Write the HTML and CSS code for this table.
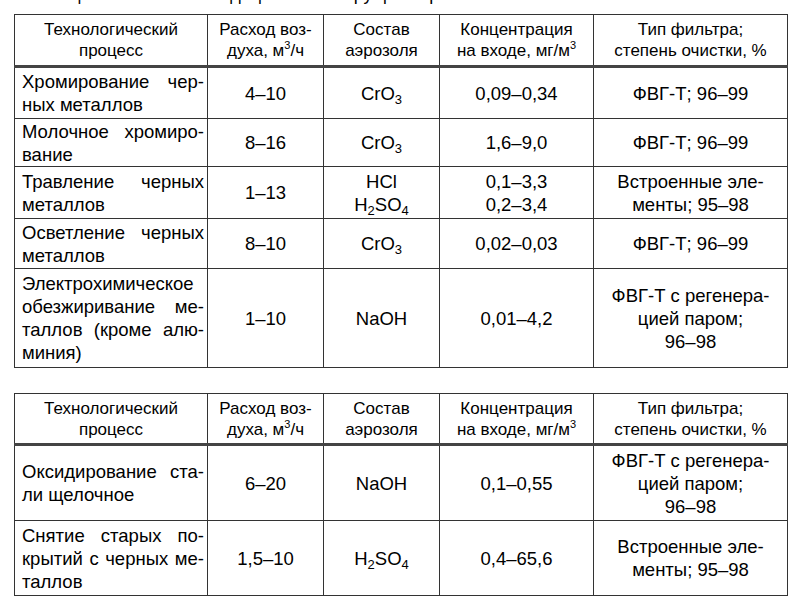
FILE: index.html
```html
<!DOCTYPE html>
<html lang="ru">
<head>
<meta charset="utf-8">
<title>Рекомендации по выбору фильтров</title>
<link rel="stylesheet" href="styles.css">
</head>
<body>
<div class="page">
  <p class="caption">Таблица 2.34 — Рекомендации по выбору фильтров</p>

  <table class="grid first">
    <colgroup>
      <col class="c-proc"><col class="c-air"><col class="c-aer"><col class="c-conc"><col class="c-filt">
    </colgroup>
    <thead>
      <tr class="h-head">
        <th>Технологический<br>процесс</th>
        <th>Расход воз-<br>духа, м<sup>3</sup>/ч</th>
        <th>Состав<br>аэрозоля</th>
        <th>Концентрация<br>на входе, мг/м<sup>3</sup></th>
        <th>Тип фильтра;<br>степень очистки, %</th>
      </tr>
    </thead>
    <tbody>
      <tr class="h-52">
        <td class="proc"><div class="j"><span>Хромирование</span><span>чер-</span></div><div>ных металлов</div></td>
        <td>4–10</td>
        <td>CrO<sub>3</sub></td>
        <td>0,09–0,34</td>
        <td>ФВГ-Т; 96–99</td>
      </tr>
      <tr class="h-48">
        <td class="proc"><div class="j"><span>Молочное</span><span>хромиро-</span></div><div>вание</div></td>
        <td>8–16</td>
        <td>CrO<sub>3</sub></td>
        <td>1,6–9,0</td>
        <td>ФВГ-Т; 96–99</td>
      </tr>
      <tr class="h-52">
        <td class="proc"><div class="j"><span>Травление</span><span>черных</span></div><div>металлов</div></td>
        <td>1–13</td>
        <td>HCl<br>H<sub>2</sub>SO<sub>4</sub></td>
        <td>0,1–3,3<br>0,2–3,4</td>
        <td>Встроенные эле-<br>менты; 95–98</td>
      </tr>
      <tr class="h-50">
        <td class="proc"><div class="j"><span>Осветление</span><span>черных</span></div><div>металлов</div></td>
        <td>8–10</td>
        <td>CrO<sub>3</sub></td>
        <td>0,02–0,03</td>
        <td>ФВГ-Т; 96–99</td>
      </tr>
      <tr class="h-99">
        <td class="proc"><div>Электрохимическое</div><div class="j"><span>обезжиривание</span><span>ме-</span></div><div class="j"><span>таллов</span><span>(кроме</span><span>алю-</span></div><div>миния)</div></td>
        <td>1–10</td>
        <td>NaOH</td>
        <td>0,01–4,2</td>
        <td>ФВГ-Т с регенера-<br>цией паром;<br>96–98</td>
      </tr>
    </tbody>
  </table>

  <table class="grid second">
    <colgroup>
      <col class="c-proc"><col class="c-air"><col class="c-aer"><col class="c-conc"><col class="c-filt">
    </colgroup>
    <thead>
      <tr class="h-head2">
        <th>Технологический<br>процесс</th>
        <th>Расход воз-<br>духа, м<sup>3</sup>/ч</th>
        <th>Состав<br>аэрозоля</th>
        <th>Концентрация<br>на входе, мг/м<sup>3</sup></th>
        <th>Тип фильтра;<br>степень очистки, %</th>
      </tr>
    </thead>
    <tbody>
      <tr class="h-76">
        <td class="proc"><div class="j"><span>Оксидирование</span><span>ста-</span></div><div>ли щелочное</div></td>
        <td>6–20</td>
        <td>NaOH</td>
        <td>0,1–0,55</td>
        <td>ФВГ-Т с регенера-<br>цией паром;<br>96–98</td>
      </tr>
      <tr class="h-75">
        <td class="proc"><div class="j"><span>Снятие</span><span>старых</span><span>по-</span></div><div class="j"><span>крытий</span><span>с</span><span>черных</span><span>ме-</span></div><div>таллов</div></td>
        <td>1,5–10</td>
        <td>H<sub>2</sub>SO<sub>4</sub></td>
        <td>0,4–65,6</td>
        <td>Встроенные эле-<br>менты; 95–98</td>
      </tr>
    </tbody>
  </table>
</div>
</body>
</html>
```

FILE: styles.css
```css
html, body {
  margin: 0;
  padding: 0;
  background: #ffffff;
}

body {
  font-family: "Liberation Sans", Arial, sans-serif;
  color: #000000;
}

.page {
  padding-left: 14px;
}

.caption {
  margin: -17px 0 0 6px;
  font-size: 18px;
  line-height: 23px;
  height: 23px;
  white-space: nowrap;
}

.grid {
  border-collapse: collapse;
  table-layout: fixed;
  width: 773px;
  border: 1px solid #333333;
}

.first {
  margin-top: 8px;
}

.second {
  margin-top: 25px;
}

.c-proc { width: 193px; }
.c-air { width: 116px; }
.c-aer { width: 116px; }
.c-conc { width: 154px; }
.c-filt { width: 194px; }

.grid th,
.grid td {
  border: 1px solid #333333;
  padding: 0 2px;
  text-align: center;
  vertical-align: middle;
}

.grid th {
  font-weight: normal;
  font-size: 17px;
  line-height: 21px;
  border-bottom: 3px solid #444444;
}

.grid td {
  font-size: 18.5px;
  line-height: 23px;
}

.grid td.proc {
  text-align: left;
  padding: 0 3px 0 7px;
}

.proc div {
  white-space: nowrap;
}

.proc .j {
  display: flex;
  justify-content: space-between;
}

sup {
  font-size: 11px;
  line-height: 0;
  vertical-align: 7px;
}

sub {
  font-size: 13px;
  line-height: 0;
  vertical-align: -4px;
}

.h-head { height: 52px; }
.h-head2 { height: 51px; }
.h-52 { height: 52px; }
.h-48 { height: 48px; }
.h-50 { height: 50px; }
.h-99 { height: 99px; }
.h-76 { height: 76px; }
.h-75 { height: 75px; }
```
